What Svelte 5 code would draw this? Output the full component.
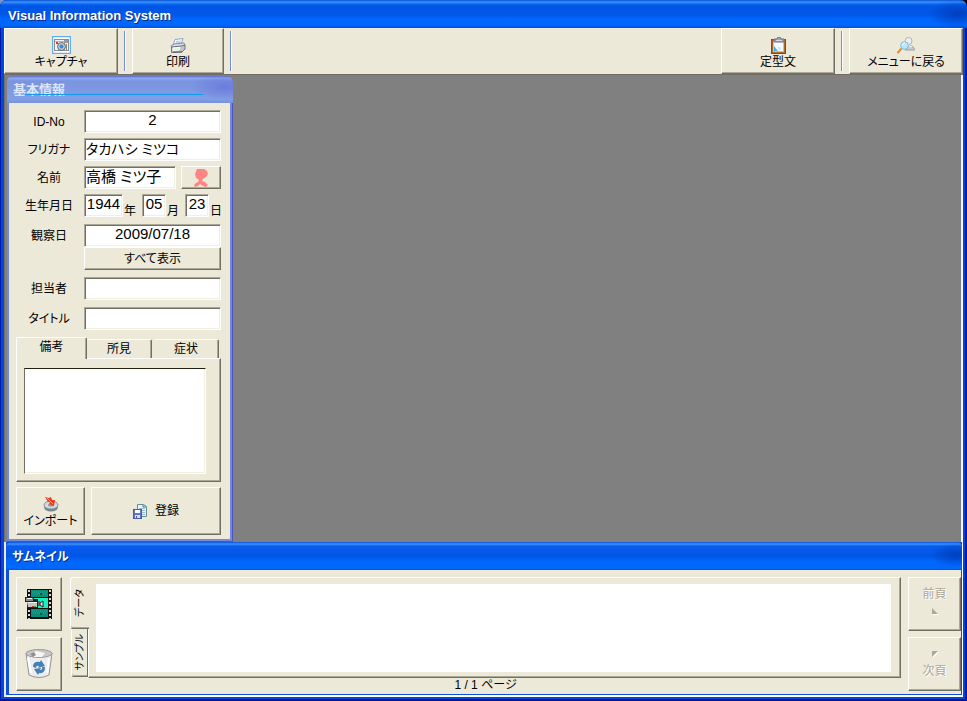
<script lang="ts">
  type Field = 'note' | 'finding' | 'symptom';

  const noteTabs: { id: Field; label: string }[] = [
    { id: 'note', label: '備考' },
    { id: 'finding', label: '所見' },
    { id: 'symptom', label: '症状' }
  ];

  const stripTabs = ['データ', 'サンプル'];

  let patient = $state({
    id: '2',
    kana: 'タカハシ ミツコ',
    name: '高橋 ミツ子',
    year: '1944',
    month: '05',
    day: '23',
    observed: '2009/07/18',
    staff: '',
    title: ''
  });

  let notes = $state({ note: '', finding: '', symptom: '' });
  let activeNote: Field = $state('note');
  let activeStrip = $state('データ');
  let page = $state(1);
  const pageCount = 1;
</script>

<div class="window">
  <header class="titlebar">
    <h1>Visual Information System</h1>
  </header>

  <div class="client">
    <nav class="toolbar">
      <button type="button" class="tool wide">
        <svg width="19" height="18" viewBox="0 0 19 18">
          <rect x="0.5" y="0.5" width="18" height="17" fill="#fff" stroke="#5eaef5" stroke-width="1.5" />
          <rect x="2.5" y="3.5" width="14" height="11" fill="#f3f3f3" stroke="#8c8c8c" />
          <path d="M3 5.5h13" stroke="#b4b4b4" />
          <rect x="4" y="6" width="2" height="2" fill="#f03020" />
          <rect x="12" y="4" width="4" height="3" fill="#999" />
          <circle cx="9.5" cy="10.5" r="4" fill="#b8cce0" stroke="#666" />
          <circle cx="9.5" cy="10.5" r="2" fill="#3f87d0" />
          <path d="M14.5 8v6" stroke="#888" />
        </svg>
        <span>キャプチャ</span>
      </button>
      <i class="rule"></i>
      <button type="button" class="tool narrow">
        <svg width="16" height="16" viewBox="0 0 16 16">
          <path d="M5 1.5l8-1-2 6-8 1z" fill="#fff" stroke="#8fa5d0" />
          <path d="M6 3.5l5-.5M5.500 5l5-.5" stroke="#a7c5e6" />
          <path d="M1 8l3-2 10-1 1 2-3 2-10 1z" fill="#d8dae0" stroke="#8a8e9c" />
          <path d="M1.500 9l10-1 3.500-1v4l-3 3-10.500.5z" fill="#c1c4cc" stroke="#70747f" />
          <path d="M3 10l7-.5-1 2.500-6 .5z" fill="#d6f5c8" stroke="#fff" />
          <path d="M3 14h9" stroke="#555b68" />
        </svg>
        <span>印刷</span>
      </button>
      <i class="rule"></i>
      <button type="button" class="tool wide push">
        <svg width="15" height="17" viewBox="0 0 15 17">
          <rect x="0.5" y="2.5" width="14" height="14" fill="#b4672b" stroke="#88481c" />
          <path d="M1 3v4" stroke="#d33" />
          <rect x="2.5" y="4.5" width="10" height="10" fill="#f4faff" stroke="#a9c9e8" />
          <path d="M3 9l4 5h-4z" fill="#3fb2ee" />
          <path d="M7 10l3 1-2 2z" fill="#b4e2fa" />
          <path d="M3 5v-3h3l1-2h2l1 2h3v3z" fill="#9ea1b2" stroke="#70758b" />
          <path d="M5 3.5h6" stroke="#d9dbe5" />
        </svg>
        <span>定型文</span>
      </button>
      <i class="rule"></i>
      <button type="button" class="tool wide">
        <svg width="18" height="17" viewBox="0 0 18 17">
          <circle cx="11.5" cy="4" r="3.5" fill="#eee" stroke="#b0b3b8" />
          <path d="M8 13c0-6 9-6 9.500 0z" fill="#c6c9ce" stroke="#9da2a8" />
          <path d="M11 8l4 2" stroke="#fff" />
          <path d="M4.500 11.500l-4 4.500" stroke="#e08a32" stroke-width="2" />
          <circle cx="7.5" cy="8.5" r="3.800" fill="#bce6fb" stroke="#79bde7" />
          <path d="M5.500 8c0-1.500 1-2 2.500-2" stroke="#fff" fill="none" />
        </svg>
        <span>メニューに戻る</span>
      </button>
    </nav>

    <main class="workspace">
      <section class="info">
        <h2>基本情報</h2>
        <form onsubmit={(event) => event.preventDefault()}>
          <div class="row">
            <label for="id">ID-No</label>
            <input id="id" class="mid" bind:value={patient.id} />
          </div>
          <div class="row">
            <label for="kana">フリガナ</label>
            <input id="kana" class="kana" bind:value={patient.kana} />
          </div>
          <div class="row">
            <label for="name">名前</label>
            <input id="name" bind:value={patient.name} />
            <button type="button" class="person" aria-label="性別">
              <svg width="14" height="18" viewBox="0 0 14 18">
                <path
                  d="M3 0h7l3 2 1 3-2 3-3 2-1 2 3 1 3 3-2 2-3-1-3-2-2 2-3 1-1-2 2-2 2-1 1-2-3-2-1-4z"
                  fill="#ff8584"
                />
              </svg>
            </button>
          </div>
          <div class="row birth">
            <label for="year">生年月日</label>
            <input id="year" class="year mid" bind:value={patient.year} />
            <span>年</span>
            <input class="mid" aria-label="月" bind:value={patient.month} />
            <span>月</span>
            <input class="mid" aria-label="日" bind:value={patient.day} />
            <span>日</span>
          </div>
          <div class="row spaced">
            <label for="observed">観察日</label>
            <input id="observed" class="mid" bind:value={patient.observed} />
          </div>
          <button type="button" class="show-all">すべて表示</button>
          <div class="row spaced">
            <label for="staff">担当者</label>
            <input id="staff" bind:value={patient.staff} />
          </div>
          <div class="row spaced">
            <label for="title">タイトル</label>
            <input id="title" bind:value={patient.title} />
          </div>

          <div class="tabs" role="tablist">
            {#each noteTabs as tab (tab.id)}
              <button
                type="button"
                role="tab"
                aria-selected={activeNote === tab.id}
                class:active={activeNote === tab.id}
                onclick={() => (activeNote = tab.id)}
              >
                {tab.label}
              </button>
            {/each}
          </div>
          <div class="note">
            <textarea aria-label="備考" bind:value={notes[activeNote]}></textarea>
          </div>

          <div class="actions">
            <button type="button" class="import">
              <svg width="16" height="16" viewBox="0 0 16 16">
                <ellipse cx="8" cy="11" rx="7" ry="4.5" fill="#74858f" />
                <ellipse cx="8" cy="9" rx="7" ry="4" fill="#d3dbde" stroke="#84939b" />
                <ellipse cx="8" cy="9" rx="3" ry="1.5" fill="#8b9ba3" />
                <path d="M2 1l4 1 2-1 1 3 3 0-1 6-5-2 1-2-2 0z" fill="#ee3b1f" />
                <path d="M4 2l4 4 2 2" stroke="#ffb05c" fill="none" />
              </svg>
              <span>インポート</span>
            </button>
            <button type="submit" class="register">
              <svg width="14" height="15" viewBox="0 0 14 15">
                <path d="M4.500.5h6l3 2v10h-9z" fill="#eaf3f8" stroke="#5f9098" />
                <path d="M10 1v2h3" stroke="#3e7b80" fill="none" />
                <path d="M6 4.500h6M6 6.500h6M9 8.500h3M9 10.500h3" stroke="#9dbbd0" />
                <rect x="0.5" y="5.5" width="8" height="9" fill="#6474bd" stroke="#4d5ba5" />
                <rect x="2" y="6" width="5" height="3" fill="#fff" />
                <rect x="2" y="11" width="5" height="3" fill="#d7dcf0" />
                <rect x="3" y="12" width="1" height="2" fill="#4d5ba5" />
              </svg>
              <span>登録</span>
            </button>
          </div>
        </form>
      </section>
    </main>

    <section class="thumbs">
      <h2>サムネイル</h2>
      <div class="strip">
        <div class="side">
          <button type="button" aria-label="動画">
            <svg width="28" height="30" viewBox="0 0 28 30">
              <rect x="2" width="25" height="30" fill="#101010" />
              <path d="M4 1v29M25 1v29" stroke="#d8d8d8" stroke-width="2" stroke-dasharray="2 2" />
              <rect x="6" y="1" width="17" height="7" fill="#0b8b7a" />
              <rect x="6" y="9" width="17" height="10" fill="#18f0c0" />
              <rect x="6" y="20" width="17" height="8" fill="#0b8b7a" />
              <path d="M7 3h15M8 5h13M7 22h15M8 24h13" stroke="#25b49b" stroke-dasharray="1 1" />
              <path d="M15 5h2M15 25h2" stroke="#0c5a18" stroke-width="2" />
              <path d="M0 8h8l1 2h4v9h-11v-6h-2z" fill="#222" />
              <path d="M2 13h10v5h-9z" fill="#c4c4c4" />
              <path d="M1 9h7v3h-7z" fill="#8c8c8c" />
              <path d="M3 13.5h9M2 9.5h5" stroke="#f4f4f4" />
              <path d="M13 12h2v5h-2z" fill="#666" />
              <path d="M15 14l3-2v6l-3-2z" fill="#eee" stroke="#222" />
              <path d="M7 17.5h2" stroke="#f02040" />
              <path d="M9 17.5h2" stroke="#35d035" />
            </svg>
          </button>
          <button type="button" aria-label="ごみ箱">
            <svg width="28" height="30" viewBox="0 0 28 30">
              <path d="M1 4l3 22q10 5 20 0l3-22z" fill="#ededed" stroke="#94949c" />
              <ellipse cx="14" cy="4.5" rx="13" ry="4" fill="#c7c7c5" stroke="#9b9ba2" />
              <path d="M5 5l6-3 9 2-3 4-8 0z" fill="#f6f6f4" />
              <path d="M5 5l4-2 2 3-3 2z" fill="#8f908e" />
              <path d="M3 9l3 15M24 9l-2 15" stroke="#fff" stroke-width="2" />
              <path d="M8 18q0-6 7-5l1-2 4 6-7 2 1-2q-3-1-3 2z" fill="#4380b5" />
              <path d="M20 18q0 7-6 6l-1 2-4-6 7-1-1 2q3 0 2-3z" fill="#4380b5" />
            </svg>
          </button>
        </div>

        <div class="vtabs" role="tablist">
          {#each stripTabs as tab (tab)}
            <button
              type="button"
              role="tab"
              aria-selected={activeStrip === tab}
              class:active={activeStrip === tab}
              onclick={() => (activeStrip = tab)}
            >
              <span>{tab}</span>
            </button>
          {/each}
        </div>

        <div class="viewer">
          <div class="frame"><div class="sheet"></div></div>
          <p>{page} / {pageCount} ページ</p>
        </div>

        <div class="side pager">
          <button type="button" class="prev" disabled={page <= 1} onclick={() => (page -= 1)}>
            <span>前頁</span>
            <svg width="8" height="8" viewBox="0 0 8 8">
              <path d="M2 2l6 6h-6z" fill="#fff" />
              <path d="M1 1l6 6h-6z" fill="#aca899" />
            </svg>
          </button>
          <button type="button" disabled={page >= pageCount} onclick={() => (page += 1)}>
            <svg width="8" height="8" viewBox="0 0 8 8">
              <path d="M2 2h6l-6 6z" fill="#fff" />
              <path d="M1 1h6l-6 6z" fill="#aca899" />
            </svg>
            <span>次頁</span>
          </button>
        </div>
      </div>
    </section>
  </div>
</div>

<style>
  :global(body) {
    background: linear-gradient(90deg, #7d95c8 50%, #000 50%);
  }

  .window {
    --face: #ece9d8;
    --shadow: #aca899;
    --dark: #716f64;
    box-sizing: border-box;
    display: flex;
    flex-direction: column;
    min-height: 100vh;
    border-radius: 7px 7px 0 0;
    background: #0148d8;
    box-shadow: inset 1px 0 #0019a8, inset -2px 0 #0019a8, inset 0 -2px #001490;
    color: #000;
    font-family: 'Liberation Sans', 'Noto Sans CJK JP', sans-serif;
    font-size: 12px;
    line-height: 14px;
    font-feature-settings: 'palt';
  }

  .titlebar {
    box-sizing: border-box;
    height: 28px;
    padding: 8px 8px 0;
    border-radius: 7px 7px 0 0;
    background:
      radial-gradient(ellipse 30px 14px at calc(100% - 10px) 14px, #0040c0, transparent),
      linear-gradient(#0b4fd0 0, #3a95ff 2px, #0a6af5 4px, #0056e4 6px, #0058ea 15px, #0067fd 19px, #0068ff 25px, #0052d8 28px);
  }

  h1,
  h2 {
    margin: 0;
    color: #fff;
    font-size: 13px;
    line-height: 16px;
    text-shadow: 1px 1px #0a2a82;
  }

  .client {
    display: flex;
    flex: 1;
    flex-direction: column;
    margin: 0 4px 4px;
    background: var(--face);
  }

  button {
    box-sizing: border-box;
    padding: 0;
    border: 1px solid;
    border-color: #fff var(--dark) var(--dark) #fff;
    border-radius: 0;
    box-shadow: inset -1px -1px var(--shadow);
    background: var(--face);
    color: inherit;
    font: inherit;
    font-feature-settings: inherit;
  }

  svg {
    display: block;
    flex: none;
  }

  .toolbar {
    display: flex;
    height: 46px;
    border-bottom: 1px solid var(--dark);
  }

  .tool {
    display: flex;
    flex-direction: column;
    align-items: center;
    justify-content: flex-end;
    gap: 1px;
    padding-bottom: 4px;
  }

  .wide {
    width: 114px;
  }

  .narrow {
    width: 92px;
  }

  .push {
    margin-left: auto;
  }

  .rule {
    width: 1px;
    margin: 3px 6px;
    border-right: 1px solid #fff;
    background: #6f8fe0;
  }

  .workspace {
    display: flex;
    flex: 1;
    padding: 1px 0 0 2px;
    border-left: 1px solid var(--dark);
    border-right: 2px solid #f4f4f8;
    background: #808080;
  }

  .info {
    display: flex;
    flex-direction: column;
    width: 226px;
    border-radius: 6px 6px 0 0;
    background: #7488dc;
    box-shadow: inset -1px -1px #5052c0;
  }

  .info h2 {
    position: relative;
    height: 21px;
    padding: 6px 6px 0;
    border-radius: 6px 6px 0 0;
    background:
      radial-gradient(ellipse 34px 13px at calc(100% - 8px) 11px, #6c7cdc, transparent),
      linear-gradient(#5a68c4 0, #90a8f0 2px, #7a94e0 5px, #7e9ae2 16px, #7f9fe6 23px, #7890dc 27px);
    color: #dce6fb;
    text-shadow: none;
  }

  .info h2::after {
    content: '';
    position: absolute;
    left: 18px;
    right: 30px;
    bottom: 8px;
    height: 1px;
    background: #129be8;
  }

  form {
    flex: 1;
    margin: 0 3px 3px 2px;
    padding: 7px 9px 4px 7px;
    background: var(--face);
  }

  .row {
    display: flex;
    align-items: center;
    margin-bottom: 5px;
  }

  .row label {
    flex: none;
    width: 66px;
    margin-right: 2px;
    text-align: center;
  }

  .row.spaced,
  .birth {
    margin-bottom: 7px;
  }

  input,
  textarea {
    box-sizing: border-box;
    border: 1px solid;
    border-color: var(--shadow) #fff #fff var(--shadow);
    border-radius: 0;
    box-shadow: inset 1px 1px var(--dark), inset -1px -1px #f1efe2;
    background: #fff;
    color: #000;
    font: inherit;
    font-feature-settings: inherit;
  }

  input {
    flex: 1;
    min-width: 0;
    height: 23px;
    padding: 0 1px 4px;
    font-size: 15px;
  }

  input.kana {
    font-size: 14px;
  }

  .mid {
    text-align: center;
  }

  .person {
    display: flex;
    align-items: center;
    justify-content: center;
    width: 40px;
    height: 23px;
    margin-left: 5px;
  }

  .birth input {
    flex: none;
    width: 24px;
  }

  .birth input.year {
    width: 39px;
  }

  .birth span {
    flex: none;
    align-self: flex-end;
    width: 12px;
    margin: 0 6px 0 1px;
    line-height: 12px;
  }

  .birth span:last-child {
    margin-right: 0;
  }

  .row.spaced:has(+ .show-all) {
    margin-bottom: 0;
  }

  .show-all {
    display: block;
    width: 137px;
    height: 23px;
    margin: 0 0 7px auto;
  }

  .tabs {
    display: flex;
    align-items: flex-end;
    height: 21px;
  }

  .tabs button {
    flex: 1;
    height: 19px;
    margin-right: 2px;
    border-width: 1px 1px 0 0;
    border-radius: 2px 2px 0 0;
    box-shadow: inset -1px 0 var(--shadow);
  }

  .tabs button.active {
    position: relative;
    flex: none;
    width: 71px;
    height: 22px;
    margin: 0 0 -1px;
    padding-bottom: 3px;
    border-left-width: 1px;
  }

  .note {
    height: 124px;
    box-sizing: border-box;
    padding: 9px 14px 7px 7px;
    border: 1px solid;
    border-color: #fff var(--dark) var(--dark) #fff;
    box-shadow: inset -1px -1px var(--shadow);
  }

  textarea {
    display: block;
    width: 100%;
    height: 106px;
    border-color: #202010 #fff #fff var(--dark);
    box-shadow: inset -1px -1px #f1efe2;
    resize: none;
  }

  .actions {
    display: flex;
    gap: 6px;
    margin-top: 5px;
  }

  .actions button {
    display: flex;
    align-items: center;
    justify-content: center;
    height: 48px;
  }

  .actions .import {
    flex-direction: column;
    gap: 2px;
    width: 69px;
    padding-top: 2px;
  }

  .actions .register {
    flex: 1;
    gap: 8px;
  }

  .thumbs {
    padding: 0 1px 1px 3px;
    margin: 0 1px 2px 2px;
    background: #0a50e0;
    box-shadow: 1px 2px #fff;
  }

  .thumbs h2 {
    height: 21px;
    padding: 7px 3px 0 6px;
    margin: 0 -1px 0 -3px;
    border-radius: 5px 5px 0 0;
    background:
      radial-gradient(ellipse 26px 12px at calc(100% - 6px) 13px, #0040c0, transparent),
      linear-gradient(#0b4fd0 0, #3a95ff 2px, #0a5cee 4px, #0056e4 14px, #0067fd 19px, #0068ff 26px, #0055e0 28px);
    font-size: 12px;
  }

  .strip {
    display: flex;
    padding: 7px 0 2px 7px;
    background: var(--face);
  }

  .side {
    display: flex;
    flex-direction: column;
    gap: 6px;
  }

  .side button {
    display: flex;
    flex-direction: column;
    align-items: center;
    justify-content: center;
    width: 46px;
    height: 54px;
  }

  .vtabs {
    display: flex;
    flex-direction: column;
    align-items: flex-end;
    margin-left: 8px;
    width: 18px;
  }

  .vtabs button {
    display: flex;
    align-items: center;
    justify-content: center;
    width: 17px;
    height: 48px;
    border-width: 0 1px 1px 1px;
    border-radius: 0 0 0 3px;
    box-shadow: inset 0 -1px var(--shadow);
  }

  .vtabs button.active {
    position: relative;
    width: 19px;
    height: 52px;
    margin-right: -1px;
    border-width: 1px 0 1px 1px;
    border-radius: 3px 0 0 3px;
  }

  .vtabs span {
    font-size: 10px;
    writing-mode: vertical-rl;
    text-orientation: sideways;
    transform: rotate(180deg);
    white-space: nowrap;
  }

  .viewer {
    flex: 1;
  }

  .frame {
    padding: 6px 9px 5px 7px;
    border: 1px solid;
    border-color: #fff var(--dark) var(--dark) #fff;
    box-shadow: inset -1px -1px var(--shadow);
  }

  .sheet {
    height: 88px;
    background: #fff;
  }

  .viewer p {
    margin: 0;
    padding-right: 18px;
    text-align: center;
  }

  .pager {
    margin-left: 7px;
  }

  .pager button {
    gap: 6px;
    width: 53px;
    color: var(--shadow);
    text-shadow: 1px 1px #fff;
  }

  .pager .prev {
    padding-bottom: 6px;
  }
</style>
